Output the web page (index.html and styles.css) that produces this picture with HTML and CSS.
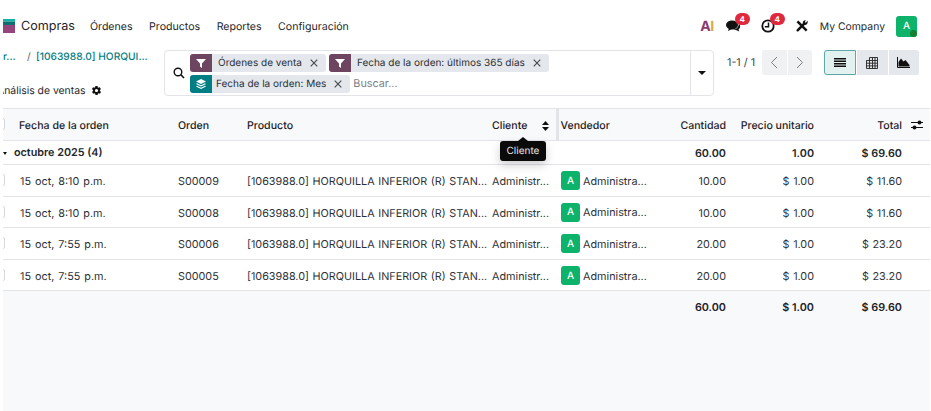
FILE: index.html
```html
<!DOCTYPE html>
<html lang="es">
<head>
<meta charset="utf-8">
<title>Compras</title>
<link rel="stylesheet" href="styles.css">
</head>
<body>
<div class="app">
  <header class="nav">
    <svg class="logo" viewBox="0 0 12 14"><rect width="12" height="2.500" fill="#12b5a5"/><rect y="2.500" width="12" height="3.500" fill="#0d6f70"/><rect y="6" width="12" height="8" fill="#96457c"/></svg>
    <span class="brand">Compras</span>
    <nav class="menu"><span>Órdenes</span><span>Productos</span><span>Reportes</span><span>Configuración</span></nav>
    <div class="systray">
      <span class="ai"><span class="ai-a">A</span><span class="ai-i">I</span></span>
      <span class="tray-item msg">
        <svg width="15" height="14" viewBox="0 0 15 14"><ellipse cx="6" cy="6" rx="6" ry="4.600" fill="#111"/><path d="M3 9l-1 3 4-2z" fill="#111"/><path d="M12.800 4.500C14 5.500 14.500 7 14 8.400C13.600 9.500 12.800 10 12.500 10.200L13.300 12.500 10 11C8.800 11.300 7.700 11 7 10.600 10 10.600 13 8.300 12.800 4.500Z" fill="#111"/></svg>
        <span class="badge">4</span>
      </span>
      <span class="tray-item clock">
        <svg width="14" height="14" viewBox="0 0 14 14"><circle cx="7" cy="7" r="5.700" fill="none" stroke="#111" stroke-width="1.800"/><path d="M7.500 3.500V7.800H3.800" fill="none" stroke="#111" stroke-width="1.500"/></svg>
        <span class="badge">4</span>
      </span>
      <svg class="tools" width="12" height="12" viewBox="0 0 12 12"><path d="M2.300.5L11.500 9.700 9.800 11.500.5 2.300Z" fill="#111"/><path d="M11.600.8L9.800 2.700 8.800 2 9.800.4C8.300 0 6.700 1 6.800 3.200L.8 9.500C.3 10 .3 10.700.8 11.200 1.300 11.700 2 11.700 2.500 11.200L8.700 5C10.800 5.300 12.200 3 11.600.8Z" fill="#111"/></svg>
      <span class="company">My Company</span>
      <span class="user"><span class="avatar big">A</span><span class="dot"></span></span>
    </div>
  </header>

  <section class="panel">
    <div class="crumbs">
      <div class="crumb-line"><a class="crumb-first">r...</a><span class="sep">/</span><a class="crumb-link">[1063988.0] HORQUI...</a></div>
      <div class="crumb-title"><span class="title-text">Análisis de ventas</span>
        <svg width="11" height="11" viewBox="0 0 24 24"><path fill="#111" d="M19.400 13c.1-.3.100-.7.100-1s0-.7-.1-1l2.100-1.600c.2-.2.200-.4.100-.6l-2-3.500c-.1-.2-.4-.3-.6-.2l-2.500 1c-.5-.4-1.100-.7-1.700-1l-.4-2.600c0-.3-.2-.5-.5-.5h-4c-.3 0-.5.200-.5.500l-.4 2.600c-.6.300-1.200.6-1.700 1l-2.500-1c-.2-.1-.5 0-.6.200l-2 3.500c-.1.200-.1.400.1.600L4.600 11c-.1.300-.1.700-.1 1s0 .7.100 1l-2.100 1.600c-.2.200-.2.400-.1.600l2 3.500c.1.200.4.300.6.200l2.500-1c.5.400 1.100.7 1.700 1l.4 2.600c0 .3.200.5.500.5h4c.3 0 .5-.2.500-.5l.4-2.600c.6-.3 1.200-.6 1.700-1l2.500 1c.2.100.5 0 .6-.2l2-3.500c.1-.2.100-.4-.1-.6zM12 15.500a3.500 3.500 0 1 1 0-7 3.500 3.500 0 0 1 0 7z"/></svg>
      </div>
    </div>

    <div class="search">
      <svg class="search-icon" width="12" height="12" viewBox="0 0 12 12"><circle cx="5" cy="5" r="3.800" fill="none" stroke="#111" stroke-width="1.400"/><path d="M7.800 7.800L11 11" stroke="#111" stroke-width="1.600"/></svg>
      <div class="facets">
        <span class="facet"><span class="facet-icon plum"><svg width="10" height="10" viewBox="0 0 10 10"><path d="M0 1h10L6 5.500V10L4 8.500V5.500Z" fill="#fff"/></svg></span><span class="facet-text">Órdenes de venta</span><svg class="x" width="8" height="8" viewBox="0 0 8 8"><path d="M.7.700l6.600 6.600M7.300.700L.7 7.300" stroke="#4a4e55" stroke-width="1.200"/></svg></span>
        <span class="facet"><span class="facet-icon plum"><svg width="10" height="10" viewBox="0 0 10 10"><path d="M0 1h10L6 5.500V10L4 8.500V5.500Z" fill="#fff"/></svg></span><span class="facet-text">Fecha de la orden: últimos 365 días</span><svg class="x" width="8" height="8" viewBox="0 0 8 8"><path d="M.7.700l6.600 6.600M7.300.700L.7 7.300" stroke="#4a4e55" stroke-width="1.200"/></svg></span>
        <span class="facet"><span class="facet-icon teal"><svg width="10" height="10" viewBox="0 0 10 10"><path d="M5 0l5 2.500-5 2.500-5-2.500z" fill="#fff"/><path d="M1 4.200L5 6.200 9 4.200 10 5 5 7.500 0 5z" fill="#fff"/><path d="M1 6.700L5 8.700 9 6.700 10 7.500 5 10 0 7.500z" fill="#fff"/></svg></span><span class="facet-text tight">Fecha de la orden: Mes</span><svg class="x" width="8" height="8" viewBox="0 0 8 8"><path d="M.7.700l6.600 6.600M7.300.700L.7 7.300" stroke="#4a4e55" stroke-width="1.200"/></svg></span>
        <span class="placeholder">Buscar...</span>
      </div>
      <span class="search-drop"><i class="caret"></i></span>
    </div>

    <div class="pager">
      <span class="pager-text">1-1 / 1</span>
      <div class="pager-btns">
        <span class="pbtn"><svg width="8" height="13" viewBox="0 0 8 13"><path d="M7 1L1.500 6.500 7 12" fill="none" stroke="#7a7f87" stroke-width="1"/></svg></span>
        <span class="pbtn"><svg width="8" height="13" viewBox="0 0 8 13"><path d="M1 1l5.500 5.500L1 12" fill="none" stroke="#7a7f87" stroke-width="1"/></svg></span>
      </div>
    </div>

    <div class="views">
      <span class="vbtn active"><svg width="12" height="9" viewBox="0 0 12 9"><path d="M0 0h12v1.500H0zM0 2.500h12V4H0zM0 5h12v1.500H0zM0 7.500h12V9H0z" fill="#111"/></svg></span>
      <span class="vbtn"><svg width="12" height="12" viewBox="0 0 12 12"><path d="M3.500 .5h8v11H.5V3.500h3zM.5 3.500h11M.5 6.200h11M.5 8.900h11M3.500 3.500v8M6.500 .5v11M9 .5v11" fill="none" stroke="#333" stroke-width="1"/></svg></span>
      <span class="vbtn"><svg width="13" height="11" viewBox="0 0 13 11"><path d="M.5 0v10.500H13" fill="none" stroke="#111" stroke-width="1"/><path d="M1.500 9.500V5L4 1.500 6.500 4.500 8.500 3 12.500 8V9.500Z" fill="#111"/></svg></span>
    </div>
  </section>

  <main class="content">
    <table class="list">
      <colgroup>
        <col class="c-sel"><col class="c-date"><col class="c-ord"><col class="c-prod"><col class="c-cli"><col class="c-ven"><col class="c-qty"><col class="c-price"><col class="c-total"><col class="c-opt">
      </colgroup>
      <thead>
        <tr>
          <th><span class="check"></span></th>
          <th>Fecha de la orden</th>
          <th>Orden</th>
          <th>Producto</th>
          <th class="th-sort"><span>Cliente</span><svg class="sort" width="7" height="10" viewBox="0 0 7 10"><path d="M3.500 0L7 4H0zM3.500 10L0 6h7z" fill="#111"/></svg></th>
          <th class="th-ven">Vendedor</th>
          <th class="num">Cantidad</th>
          <th class="num">Precio unitario</th>
          <th class="num">Total</th>
          <th class="opt"><svg width="12" height="10" viewBox="0 0 12 10"><path d="M0 2h12v1.100H0zM0 6.900h12V8H0z" fill="#111"/><circle cx="8.500" cy="2.500" r="2" fill="#111"/><circle cx="3.500" cy="7.500" r="2" fill="#111"/></svg></th>
        </tr>
      </thead>
      <tbody>
        <tr class="group">
          <td colspan="6"><i class="group-caret"></i><span class="group-name">octubre 2025 (4)</span></td>
          <td class="num">60.00</td><td class="num">1.00</td><td class="num">$ 69.60</td><td></td>
        </tr>
        <tr><td><span class="check"></span></td><td class="date">15 oct, 8:10 p.m.</td><td>S00009</td><td class="prod">[1063988.0] HORQUILLA INFERIOR (R) STAN...</td><td>Administr...</td><td><span class="seller"><span class="avatar">A</span><span class="seller-name">Administra...</span></span></td><td class="num">10.00</td><td class="num">$ 1.00</td><td class="num">$ 11.60</td><td></td></tr>
        <tr><td><span class="check"></span></td><td class="date">15 oct, 8:10 p.m.</td><td>S00008</td><td class="prod">[1063988.0] HORQUILLA INFERIOR (R) STAN...</td><td>Administr...</td><td><span class="seller"><span class="avatar">A</span><span class="seller-name">Administra...</span></span></td><td class="num">10.00</td><td class="num">$ 1.00</td><td class="num">$ 11.60</td><td></td></tr>
        <tr><td><span class="check"></span></td><td class="date">15 oct, 7:55 p.m.</td><td>S00006</td><td class="prod">[1063988.0] HORQUILLA INFERIOR (R) STAN...</td><td>Administr...</td><td><span class="seller"><span class="avatar">A</span><span class="seller-name">Administra...</span></span></td><td class="num">20.00</td><td class="num">$ 1.00</td><td class="num">$ 23.20</td><td></td></tr>
        <tr><td><span class="check"></span></td><td class="date">15 oct, 7:55 p.m.</td><td>S00005</td><td class="prod">[1063988.0] HORQUILLA INFERIOR (R) STAN...</td><td>Administr...</td><td><span class="seller"><span class="avatar">A</span><span class="seller-name">Administra...</span></span></td><td class="num">20.00</td><td class="num">$ 1.00</td><td class="num">$ 23.20</td><td></td></tr>
      </tbody>
      <tfoot>
        <tr><td colspan="6"></td><td class="num">60.00</td><td class="num">$ 1.00</td><td class="num">$ 69.60</td><td></td></tr>
      </tfoot>
    </table>
    <div class="tooltip">Cliente</div>
  </main>
</div>
</body>
</html>
```
FILE: styles.css
```css
html, body { margin: 0; height: 100%; background: #fff; overflow: hidden; }
body { font-family: Inter, "Noto Sans", sans-serif; font-size: 10.800px; color: #24272b; text-rendering: geometricPrecision; }
.app { height: 411px; margin-left: 3px; margin-right: 1px; display: flex; flex-direction: column; overflow: hidden; }

.nav { height: 50px; flex: none; display: flex; align-items: center; padding-top: 2px; box-sizing: border-box; }
.logo { width: 12px; height: 14px; }
.brand { font-size: 12.600px; margin-left: 6px; color: #1f2226; }
.menu { display: flex; gap: 16.500px; margin-left: 15px; font-size: 10.600px; }
.systray { margin-left: auto; display: flex; align-items: center; margin-right: 13px; }
.ai { font-weight: 700; font-size: 14px; display: flex; letter-spacing: -.5px; margin-right: 12px; }
.ai-a { color: #8a3c6f; }
.ai-i { color: #e8a33d; }
.tray-item { position: relative; display: flex; align-items: center; margin-right: 20px; }
.clock { margin-right: 21px; }
.badge { position: absolute; left: 9px; top: -6px; width: 15px; height: 12px; line-height: 12px; border-radius: 6px; background: #e0293c; color: #fff; font-size: 8px; font-weight: 700; text-align: center; }
.tools { margin-right: 12px; }
.company { margin-right: 11px; font-size: 10.400px; }
.user { position: relative; display: flex; }
.avatar { width: 19px; height: 19px; border-radius: 3px; background: #0db36b; color: #fff; display: flex; align-items: center; justify-content: center; font-size: 10px; font-weight: 500; flex: none; }
.avatar.big { width: 21px; height: 21px; }
.dot { position: absolute; right: 0; bottom: 0; width: 7px; height: 7px; border-radius: 50%; background: #12802f; }

.panel { height: 58px; flex: none; display: flex; align-items: flex-start; }
.crumbs { width: 161px; flex: none; overflow: hidden; }
.crumb-line { display: flex; height: 14px; line-height: 14px; font-weight: 500; font-size: 10.200px; }
.crumb-first { color: #017e84; width: 24px; }
.sep { width: 9px; color: #5b6068; font-weight: 400; }
.crumb-link { color: #017e84; white-space: nowrap; }
.crumb-title { display: flex; align-items: center; gap: 5px; margin-top: 19px; height: 14px; }
.title-text { margin-left: -6px; white-space: nowrap; font-size: 10.400px; }
.search { width: 550px; height: 46px; box-sizing: border-box; border: 1px solid #e2e4e8; border-radius: 4px; display: flex; align-items: center; flex: none; }
.search-icon { margin-left: 8px; flex: none; }
.facets { flex: 1; display: flex; flex-wrap: wrap; gap: 3px; margin-left: 5px; align-content: center; }
.facet { display: flex; align-items: center; height: 18px; background: #e4e7eb; border-radius: 3px; overflow: hidden; }
.facet-icon { width: 22px; height: 18px; display: flex; align-items: center; justify-content: center; }
.plum { background: #6d4560; }
.teal { background: #017e84; }
.facet-text { margin-left: 6px; font-size: 10px; color: #2c3036; }
.facet-text.tight { margin-left: 4px; }
.x { margin: 0 8px; }
.placeholder { color: #7a7f87; height: 18px; line-height: 18px; }
.search-drop { width: 22px; align-self: stretch; border-left: 1px solid #e2e4e8; display: flex; align-items: center; justify-content: center; flex: none; }
.caret { width: 0; height: 0; border: 4px solid transparent; border-top-color: #111; border-bottom: 0; }
.pager { display: flex; align-items: center; height: 25px; margin-left: 13px; }
.pager-text { width: 35px; color: #3a3e44; white-space: nowrap; }
.pager-btns { display: flex; gap: 1px; }
.pbtn { width: 24.500px; height: 25px; background: #f0f1f3; display: flex; align-items: center; justify-content: center; }
.pbtn:first-child { border-radius: 3px 0 0 3px; }
.pbtn:last-child { border-radius: 0 3px 3px 0; }
.views { display: flex; margin-left: 12px; gap: 1px; }
.vbtn { width: 30.500px; height: 25px; background: #e4e7eb; display: flex; align-items: center; justify-content: center; box-sizing: border-box; }
.vbtn:last-child { border-radius: 0 3px 3px 0; }
.vbtn.active { width: 32px; background: #e3f2f1; border: 1px solid #5fa8aa; border-radius: 3px 0 0 3px; }

.content { flex: 1; position: relative; background: #f8f9fb; }
.list { width: 927px; table-layout: fixed; border-collapse: collapse; border-top: 1.500px solid #e2e4e8; }
.c-sel { width: 12px; } .c-date { width: 159px; } .c-ord { width: 69px; } .c-prod { width: 245px; } .c-cli { width: 69px; }
.c-ven { width: 103px; } .c-qty { width: 70px; } .c-price { width: 88px; } .c-total { width: 88px; } .c-opt { width: 24px; }
th, td { padding: 3px 4px 0; height: 31.600px; box-sizing: border-box; text-align: left; white-space: nowrap; font-size: 10.800px; background: #fff; }
thead th { height: 31.500px; background: #f8f9fb; font-weight: 500; color: #1f2226; border-bottom: 1px solid #e2e4e8; font-size: 10.600px; }
tbody tr { border-bottom: 1.500px solid #e2e4e8; }
tbody td { color: #2c3036; }
tbody td.date { padding-left: 5px; word-spacing: 1px; }
tbody td.prod { word-spacing: .6px; }
tbody td.num { word-spacing: .6px; }
th.num, td.num { text-align: right; }
.check { display: block; width: 12px; height: 12px; margin-left: -10px; border: 1px solid #d5d8dc; border-radius: 2px; background: #fff; box-sizing: border-box; }
thead th:first-child, tbody td:first-child { padding: 0; overflow: hidden; }
tbody tr.group td:first-child { overflow: visible; }
.th-sort { position: relative; }
.sort { position: absolute; right: 7px; top: 12px; }
.th-ven { border-left: 3px solid #e2e4e8; padding-left: 2px; }
th.opt { padding: 0 7px 0 0; }
th.opt svg { display: block; margin-left: auto; margin-top: 2px; }
tr.group td { height: 24.500px; font-weight: 600; color: #24272b; word-spacing: 0; }
.group-caret { display: inline-block; width: 0; height: 0; border: 2.500px solid transparent; border-top: 3.500px solid #111; border-bottom: 0; margin: 0 7px 1px 0; }
.seller { display: flex; align-items: center; gap: 3px; margin-top: -2px; }
.seller-name { white-space: nowrap; padding-top: 1px; }
tfoot td { background: #f8f9fb; font-weight: 600; color: #1f2226; height: 30px; }
.tooltip { position: absolute; left: 497px; top: 33px; width: 46px; height: 20px; line-height: 20px; text-align: center; color: #e4e5e7; background: #0a0a0a; border-radius: 3px; font-size: 10px; box-shadow: 0 4px 10px rgba(0,0,0,.2); }
.tooltip::before { content: ""; position: absolute; left: 18px; top: -4px; border: 5px solid transparent; border-top: 0; border-bottom: 4px solid #0a0a0a; }
```
